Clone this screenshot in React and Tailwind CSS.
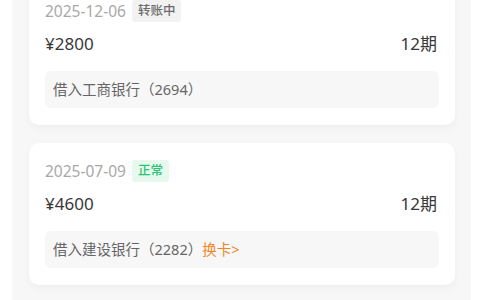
import React from "react";

const records = [
  {
    id: 1,
    date: "2025-12-06",
    status: "转账中",
    tone: "gray",
    amount: "¥2800",
    term: "12期",
    bank: "借入工商银行（2694）",
    change: false,
  },
  {
    id: 2,
    date: "2025-07-09",
    status: "正常",
    tone: "green",
    amount: "¥4600",
    term: "12期",
    bank: "借入建设银行（2282）",
    change: true,
  },
];

function Badge({ tone, children }) {
  const cls =
    tone === "green"
      ? "bg-[#e7f8ee] text-[#2cc276]"
      : "bg-[#f2f2f2] text-[#6b6b6b]";
  return (
    <span
      className={`inline-flex h-[22px] items-center rounded-[3px] px-[6px] text-[12.5px] font-medium ${cls}`}
    >
      {children}
    </span>
  );
}

export default function App() {
  return (
    <div
      className="h-[300px] w-[480px] overflow-hidden bg-white"
      style={{ fontFamily: '"Noto Sans", "Noto Sans CJK SC", sans-serif' }}
    >
      <div className="mx-[12px] -mt-[17px] flex w-[459px] flex-col gap-[18px] bg-[#f7f7f7] pl-[17px] pr-[16px] pb-[40px]">
        {records.map((r) => (
          <div
            key={r.id}
            className="flex flex-col rounded-[10px] bg-white px-4 pt-[17px] pb-[17px] shadow-[0_4px_8px_rgba(0,0,0,0.035)]"
          >
            <div className="flex items-center gap-[6px]">
              <span className="text-[15.5px] leading-[22px] text-[#a8a8a8]">
                {r.date}
              </span>
              <Badge tone={r.tone}>{r.status}</Badge>
            </div>
            <div className="mt-[10px] flex h-[24px] items-center justify-between text-[17px] text-[#383838]">
              <span>{r.amount}</span>
              <span className="pr-[2px]">{r.term}</span>
            </div>
            <div className="mt-[15px] flex h-[37px] items-center rounded-[6px] bg-[#f7f7f7] px-2 text-[14.5px] text-[#666]">
              <span>{r.bank}</span>
              {r.change && <span className="text-[#f0862a]">换卡&gt;</span>}
            </div>
          </div>
        ))}
      </div>
    </div>
  );
}
